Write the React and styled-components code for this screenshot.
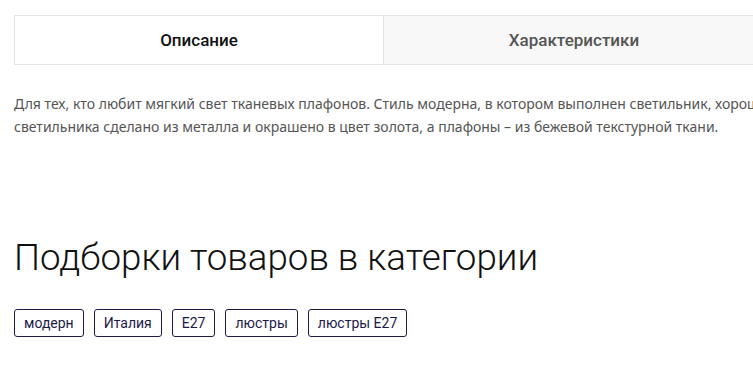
import React from "react";
import styled, { createGlobalStyle } from "styled-components";

const tags = ["модерн", "Италия", "E27", "люстры", "люстры E27"];

const App = () => {
  return (
    <>
      <GlobalStyle />
      <Wrapper>
        <Tabs>
          <Tab active>Описание</Tab>
          <Tab>Характеристики</Tab>
        </Tabs>
        <Description>
          Для тех, кто любит мягкий свет тканевых плафонов. Стиль модерна, в котором выполнен светильник, хорошо
          впишется в любой интерьер. Основание светильника сделано из металла и окрашено в цвет золота, а плафоны – из
          бежевой текстурной ткани.
        </Description>
        <Title>Подборки товаров в категории</Title>
        <TagList>
          {tags.map((tag) => (
            <Tag key={tag}>{tag}</Tag>
          ))}
        </TagList>
      </Wrapper>
    </>
  );
};

// Styled Components
const GlobalStyle = createGlobalStyle`
  html, body {
    margin: 0;
    padding: 0;
    background: #fff;
    overflow: hidden;
  }
`;

const Wrapper = styled.div`
  width: 1140px;
  padding: 15px 14px 0;
`;

const Tabs = styled.div`
  display: flex;
`;

const Tab = styled.div`
  width: ${({ active }) => (active ? "368px" : "380px")};
  height: 48px;
  display: flex;
  align-items: center;
  justify-content: center;
  border: 1px solid #e4e4e4;
  border-left-width: ${({ active }) => (active ? "1px" : "0")};
  background: ${({ active }) => (active ? "#fff" : "#f8f8f8")};
  color: ${({ active }) => (active ? "#111" : "#555")};
  font-family: Roboto, sans-serif;
  font-size: 17px;
  font-weight: 500;
`;

const Description = styled.p`
  width: 1100px;
  margin: 27px 0 0;
  font-family: "Noto Sans", sans-serif;
  font-size: 14px;
  line-height: 23px;
  color: #555;
`;

const Title = styled.h2`
  margin: 98px 0 0;
  font-family: Roboto, sans-serif;
  font-size: 36.7px;
  font-weight: 300;
  line-height: 44px;
  color: #111;
`;

const TagList = styled.div`
  display: flex;
  gap: 10px;
  margin-top: 29px;
`;

const Tag = styled.span`
  height: 26px;
  display: flex;
  align-items: center;
  padding: 0 9px;
  border: 1px solid #1c1a48;
  border-radius: 3px;
  font-family: Roboto, sans-serif;
  font-size: 14px;
  color: #1c1a48;
`;

export default App;
